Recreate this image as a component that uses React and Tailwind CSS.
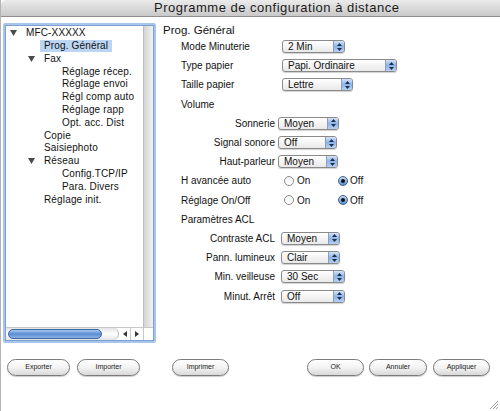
const font = { fontFamily: '"Liberation Sans", Arial, sans-serif' };

const tree = [
  { level: 0, label: 'MFC-XXXXX', open: true },
  { level: 1, label: 'Prog. Général', selected: true },
  { level: 1, label: 'Fax', open: true },
  { level: 2, label: 'Réglage récep.' },
  { level: 2, label: 'Réglage envoi' },
  { level: 2, label: 'Régl comp auto' },
  { level: 2, label: 'Réglage rapp' },
  { level: 2, label: 'Opt. acc. Dist' },
  { level: 1, label: 'Copie' },
  { level: 1, label: 'Saisiephoto' },
  { level: 1, label: 'Réseau', open: true },
  { level: 2, label: 'Config.TCP/IP' },
  { level: 2, label: 'Para. Divers' },
  { level: 1, label: 'Réglage init.' },
];

const indents = ['pl-[4px]', 'pl-[22px]', 'pl-[40px]'];

const Disclosure = () => (
  <svg width="7" height="6" viewBox="0 0 7 6">
    <polygon points="0,0 7,0 3.5,6" fill="#4a4a4a" />
  </svg>
);

const TreeRow = ({ item }) => (
  <div className={`flex items-center h-[12.8px] ${indents[item.level]}`}>
    <div className="w-[16px] flex items-center">{item.open && <Disclosure />}</div>
    <span
      className={`-ml-[4px] px-[4px] text-[10px] leading-[12.4px] tracking-[0.15px] text-[#111] whitespace-nowrap ${
        item.selected ? 'bg-[#bcd5f3]' : ''
      }`}
    >
      {item.label}
    </span>
  </div>
);

const Stepper = () => (
  <div className="w-[11px] h-full flex items-center justify-center rounded-r-[2px] border-l border-[#8d9fb8] bg-gradient-to-b from-[#d3e3f7] via-[#8db4e8] to-[#b5d0f2]">
    <svg width="5" height="8" viewBox="0 0 5 8">
      <polygon points="2.5,0 5,3 0,3" fill="#1d2f4a" />
      <polygon points="0,5 5,5 2.5,8" fill="#1d2f4a" />
    </svg>
  </div>
);

const Popup = ({ value, width }) => (
  <div
    className="flex items-center h-[13px] rounded-[3px] border border-[#8a8a8a] bg-gradient-to-b from-white to-[#e9e9e9] shadow-[0_1px_1px_rgba(0,0,0,0.18)] overflow-hidden"
    style={{ width }}
  >
    <span className="flex-1 pl-[5px] text-[10px] leading-[11px] text-[#111] whitespace-nowrap">{value}</span>
    <Stepper />
  </div>
);

const Radio = ({ on }) =>
  on ? (
    <div className="w-[10px] h-[10px] rounded-full border border-[#3e5f8c] bg-gradient-to-b from-[#c4daf5] to-[#5a8fd6] flex items-center justify-center">
      <div className="w-[4px] h-[4px] rounded-full bg-[#111]" />
    </div>
  ) : (
    <div className="w-[10px] h-[10px] rounded-full border border-[#8c8c8c] bg-gradient-to-b from-[#f4f4f4] to-white" />
  );

const Row = ({ children }) => <div className="flex items-center h-[19.2px] pl-[18px]">{children}</div>;

const Label = ({ children }) => (
  <span className="w-[101px] text-[10px] text-[#111] whitespace-nowrap">{children}</span>
);

const SubRow = ({ label, value, width, gap }) => (
  <Row>
    <span className="w-[94px] text-right text-[10px] text-[#111] whitespace-nowrap">{label}</span>
    <div className={gap}>
      <Popup value={value} width={width} />
    </div>
  </Row>
);

const RadioRow = ({ label }) => (
  <Row>
    <span className="w-[103px] text-[10px] text-[#111] whitespace-nowrap">{label}</span>
    <Radio />
    <span className="ml-[3px] w-[41px] text-[10px] text-[#111]">On</span>
    <Radio on />
    <span className="ml-[2px] text-[10px] text-[#111]">Off</span>
  </Row>
);

const Button = ({ children, className }) => (
  <div
    className={`h-[17px] flex items-center justify-center rounded-full border border-[#7b7b7b] bg-gradient-to-b from-white via-[#f3f3f3] to-[#d9d9d9] shadow-[0_1px_1px_rgba(0,0,0,0.2)] text-[7px] text-[#222] ${className}`}
  >
    {children}
  </div>
);

export default function App() {
  return (
    <div className="w-[500px] h-[411px] bg-white overflow-hidden relative border-l border-[#b4b4b4]" style={font}>
      {/* title bar */}
      <div className="h-[17px] rounded-tl-[5px] border-b border-[#8e8e8e] bg-gradient-to-b from-[#ebebeb] to-[#c9c9c9] pl-[153px] text-[13px] leading-[16px] tracking-[0.5px] text-[#1b1b1b]">
        Programme de configuration à distance
      </div>

      <div className="flex pt-[6px]">
        {/* tree */}
        <div className="ml-[2px] w-[153px] h-[320px] border-[2px] border-[#a8c6ec] rounded-[2px]">
          <div className="w-full h-full border border-[#7b9fd0] flex flex-col bg-white">
            <div className="flex flex-1">
              <div className="flex-1 pt-[1px]">
                {tree.map((item, i) => (
                  <TreeRow key={i} item={item} />
                ))}
              </div>
              <div className="w-[10px] border-l border-[#bdbdbd] bg-gradient-to-r from-[#d4d4d4] to-[#f2f2f2]" />
            </div>
            <div className="flex h-[13px] border-t border-[#c8c8c8]">
              <div className="w-[113px] h-full flex items-center pl-[2px] rounded-r-full border-r border-[#b8b8b8] bg-gradient-to-b from-[#e4e4e4] via-white to-[#e4e4e4]">
                <div className="w-[94px] h-[10px] rounded-full border border-[#3c67a3] bg-gradient-to-b from-[#a9c8ee] via-[#5a8dd2] to-[#8db3e6]" />
              </div>
              <div className="w-[12px] flex items-center justify-center border-r border-[#c8c8c8]">
                <svg width="4" height="6" viewBox="0 0 4 6">
                  <polygon points="4,0 4,6 0,3" fill="#333" />
                </svg>
              </div>
              <div className="w-[12px] flex items-center justify-center">
                <svg width="4" height="6" viewBox="0 0 4 6">
                  <polygon points="0,0 0,6 4,3" fill="#333" />
                </svg>
              </div>
              <div className="flex-1 border-l border-[#c8c8c8] bg-white" />
            </div>
          </div>
        </div>

        {/* settings */}
        <div className="ml-[7px] flex-1">
          <div className="h-[14px] text-[11.5px] leading-[14px] text-[#111]">Prog. Général</div>
          <Row>
            <Label>Mode Minuterie</Label>
            <Popup value="2 Min" width={63} />
          </Row>
          <Row>
            <Label>Type papier</Label>
            <Popup value="Papi. Ordinaire" width={115} />
          </Row>
          <Row>
            <Label>Taille papier</Label>
            <Popup value="Lettre" width={71} />
          </Row>
          <Row>
            <Label>Volume</Label>
          </Row>
          <SubRow label="Sonnerie" value="Moyen" width={61} gap="ml-[3px]" />
          <SubRow label="Signal sonore" value="Off" width={59} gap="ml-[3px]" />
          <SubRow label="Haut-parleur" value="Moyen" width={60} gap="ml-[3px]" />
          <RadioRow label="H avancée auto" />
          <RadioRow label="Réglage On/Off" />
          <Row>
            <Label>Paramètres ACL</Label>
          </Row>
          <SubRow label="Contraste ACL" value="Moyen" width={59} gap="ml-[6px]" />
          <SubRow label="Pann. lumineux" value="Clair" width={59} gap="ml-[6px]" />
          <SubRow label="Min. veilleuse" value="30 Sec" width={64} gap="ml-[6px]" />
          <SubRow label="Minut. Arrêt" value="Off" width={64} gap="ml-[6px]" />
        </div>
      </div>

      {/* buttons */}
      <div className="flex mt-[16px] pl-[6px]">
        <Button className="w-[63px]">Exporter</Button>
        <Button className="w-[63px] ml-[7px]">Importer</Button>
        <Button className="w-[57px] ml-[32px]">Imprimer</Button>
        <Button className="w-[57px] ml-[78px]">OK</Button>
        <Button className="w-[58px] ml-[5px]">Annuler</Button>
        <Button className="w-[57px] ml-[6px]">Appliquer</Button>
      </div>

      {/* resize grip */}
      <svg className="absolute right-[2px] bottom-[2px]" width="9" height="9" viewBox="0 0 9 9">
        <line x1="1" y1="9" x2="9" y2="1" stroke="#a0a0a0" />
        <line x1="4" y1="9" x2="9" y2="4" stroke="#a0a0a0" />
        <line x1="7" y1="9" x2="9" y2="7" stroke="#a0a0a0" />
      </svg>
    </div>
  );
}
